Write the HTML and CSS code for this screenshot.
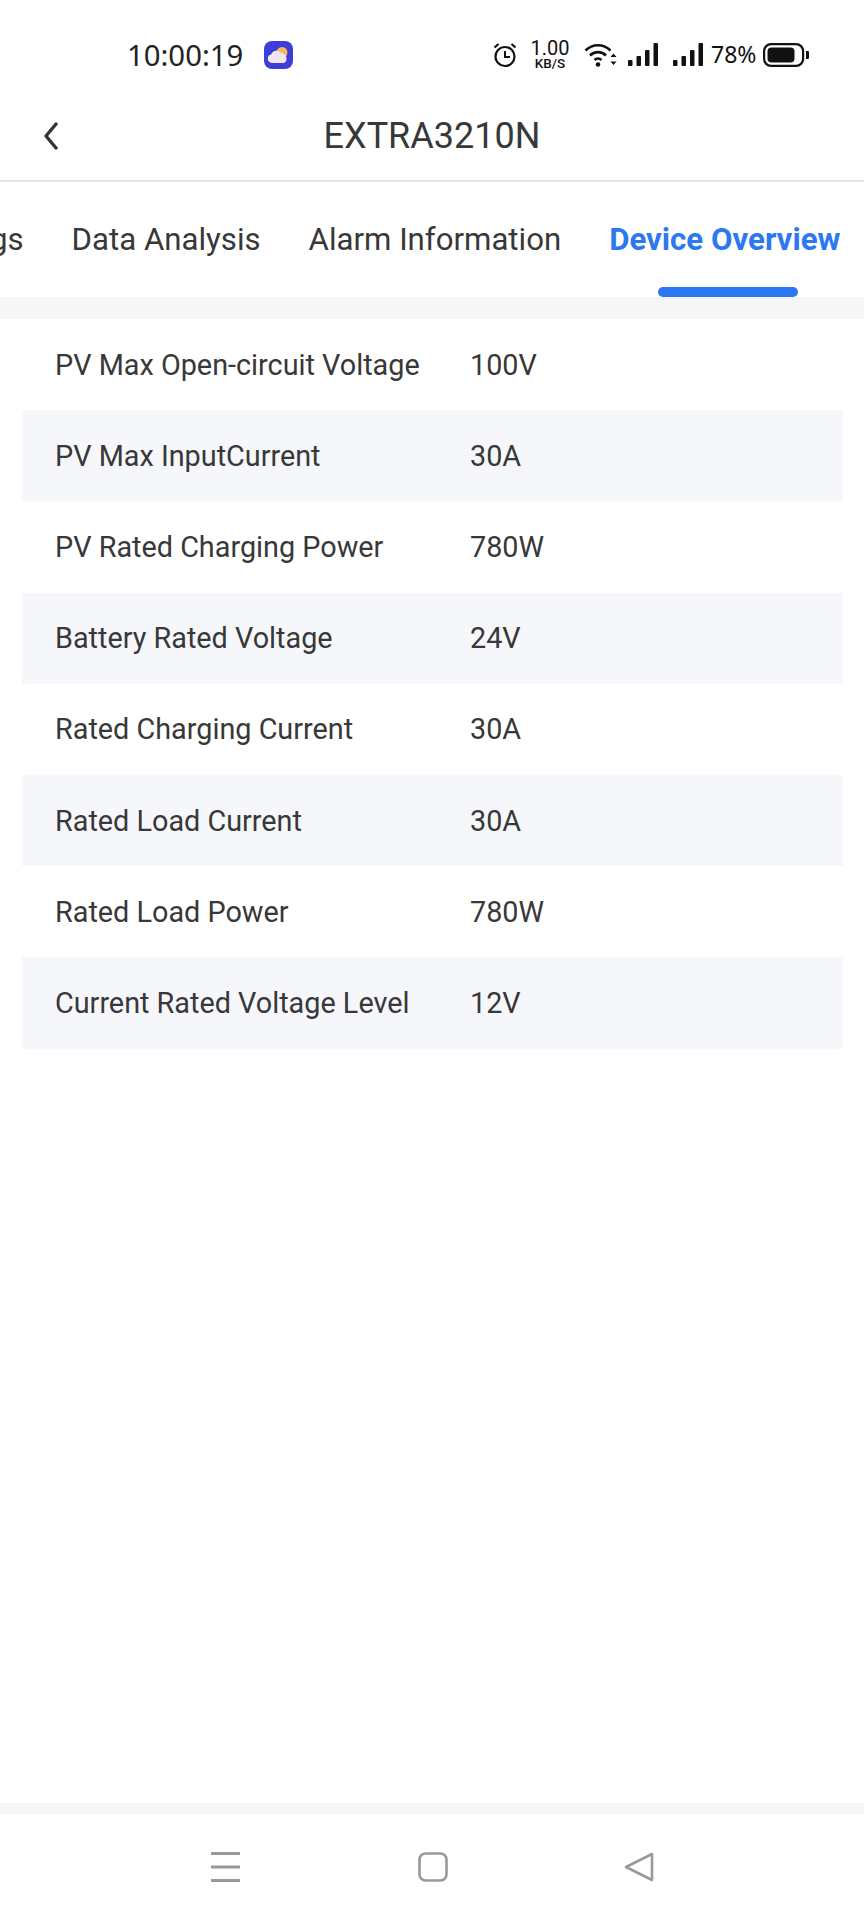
FILE: index.html
```html
<!DOCTYPE html>
<html>
<head>
<meta charset="utf-8">
<title>EXTRA3210N</title>
<link rel="stylesheet" href="styles.css">
</head>
<body>
<div class="phone">

<div class="statusbar">
  <span class="clock">10:00:19</span>
  <svg class="appicon" width="29" height="28" viewBox="0 0 29 28">
    <rect x="0" y="0" width="29" height="28" rx="8" fill="#3d3dd8"/>
    <circle cx="18" cy="11.500" r="5.500" fill="#f6b95c"/>
    <path d="M8 22a4.300 4.300 0 0 1-.8-8.500 5.600 5.600 0 0 1 9.800-1.500 5.200 5.200 0 0 1 5.500 5 4.700 4.700 0 0 1-2.500 5z" fill="#f1e6ee"/>
  </svg>
  <div class="status-right">
    <svg class="alarm" width="24" height="26" viewBox="0 0 24 26" fill="none" stroke="#111">
      <circle cx="12" cy="14.500" r="9.500" stroke-width="2.200"/>
      <path d="M12 9v6h5" stroke-width="2"/>
      <path d="M1.500 5.500l4-3.500M22.500 5.500l-4-3.500" stroke-width="2.200"/>
    </svg>
    <div class="netspeed"><span class="n1">1.00</span><span class="n2">KB/S</span></div>
    <svg class="wifi" width="33" height="24" viewBox="0 0 33 24" fill="none" stroke="#111" stroke-width="2.600">
      <path d="M1.500 7.500c7-7 18-7 25 0M6 12.500c4.500-4.500 11.500-4.500 16 0M10.500 17c2-2 5-2 7 0"/>
      <circle cx="14" cy="21.500" r="2.300" fill="#111" stroke="none"/>
      <path d="M29.500 10.500l3 3.500h-6zM29.500 22l3-3.500h-6z" fill="#111" stroke="none"/>
    </svg>
    <svg class="signal first" width="30" height="24" viewBox="0 0 30 24" fill="#111">
      <rect x="0" y="17" width="4.500" height="6" rx="1"/>
      <rect x="8.500" y="13" width="4.500" height="10" rx="1"/>
      <rect x="17" y="7" width="4.500" height="16" rx="1"/>
      <rect x="25.500" y="0" width="4.500" height="23" rx="1"/>
    </svg>
    <svg class="signal" width="30" height="24" viewBox="0 0 30 24" fill="#111">
      <rect x="0" y="17" width="4.500" height="6" rx="1"/>
      <rect x="8.500" y="13" width="4.500" height="10" rx="1"/>
      <rect x="17" y="7" width="4.500" height="16" rx="1"/>
      <rect x="25.500" y="0" width="4.500" height="23" rx="1"/>
    </svg>
    <span class="pct">78%</span>
    <svg class="battery" width="46" height="26" viewBox="0 0 46 26" fill="none">
      <rect x="1.100" y="2.100" width="39" height="21.800" rx="7" stroke="#111" stroke-width="2.200"/>
      <rect x="4.500" y="5.500" width="27" height="15" rx="4" fill="#111"/>
      <path d="M43 9h2a1 1 0 0 1 1 1v6a1 1 0 0 1-1 1h-2z" fill="#111"/>
    </svg>
  </div>
</div>

<div class="navbar">
  <svg class="back" width="14" height="28" viewBox="0 0 14 28" fill="none" stroke="#333" stroke-width="3.400" stroke-linecap="round" stroke-linejoin="round">
    <path d="M12 2L2 14l10 12"/>
  </svg>
  <div class="title">EXTRA3210N</div>
</div>

<div class="tabs">
  <span class="tab cut">gs</span>
  <span class="tab">Data Analysis</span>
  <span class="tab">Alarm Information</span>
  <span class="tab active">Device Overview</span>
</div>
<div class="band"></div>

<div class="list">
  <div class="row"><span class="label">PV Max Open-circuit Voltage</span><span>100V</span></div>
  <div class="row alt"><span class="label">PV Max InputCurrent</span><span>30A</span></div>
  <div class="row"><span class="label">PV Rated Charging Power</span><span>780W</span></div>
  <div class="row alt"><span class="label">Battery Rated Voltage</span><span>24V</span></div>
  <div class="row"><span class="label">Rated Charging Current</span><span>30A</span></div>
  <div class="row alt"><span class="label">Rated Load Current</span><span>30A</span></div>
  <div class="row"><span class="label">Rated Load Power</span><span>780W</span></div>
  <div class="row alt"><span class="label">Current Rated Voltage Level</span><span>12V</span></div>
</div>

<div class="spacer"></div>
<div class="band bottom"></div>

<div class="sysnav">
  <svg width="32" height="30" viewBox="0 0 32 30" fill="none" stroke="#999" stroke-width="3">
    <path d="M1 1.500h29M1 15h29M1 28.500h29"/>
  </svg>
  <svg width="30" height="30" viewBox="0 0 30 30" fill="none" stroke="#999" stroke-width="2.600">
    <rect x="1.500" y="1.500" width="27" height="27" rx="6"/>
  </svg>
  <svg width="30" height="30" viewBox="0 0 30 30" fill="none" stroke="#999" stroke-width="2.600" stroke-linejoin="round">
    <path d="M28 2v26L2 15z"/>
  </svg>
</div>

</div>
</body>
</html>
```

FILE: styles.css
```css
html, body { margin: 0; padding: 0; background: #fff; }
body { font-family: Roboto, "Liberation Sans", sans-serif; color: #383838; }

.phone { width: 864px; height: 1920px; display: flex; flex-direction: column; overflow: hidden; }

/* status bar */
.statusbar { height: 110px; display: flex; align-items: center; padding: 0 55px 0 127px; box-sizing: border-box; color: #111; }
.clock { font-family: "Noto Sans", sans-serif; font-size: 29.300px; color: #222; width: 137px; }
.appicon { display: block; }
.status-right { margin-left: auto; display: flex; align-items: center; }
.status-right svg { display: block; }
.netspeed { display: flex; flex-direction: column; align-items: center; width: 36px; margin-left: 15px; }
.n1 { font-size: 20px; line-height: 17px; }
.n2 { font-size: 13.500px; line-height: 13px; font-weight: 500; }
.wifi { margin-left: 16px; }
.signal { margin-left: 15px; }
.signal.first { margin-left: 11px; }
.pct { font-family: "Noto Sans", sans-serif; font-size: 23px; line-height: 24px; width: 45px; margin: -2px 0 0 8px; white-space: nowrap; }
.battery { margin-left: 7px; }

/* title bar */
.navbar { height: 72px; padding-bottom: 18px; box-sizing: border-box; display: grid; grid-template-columns: 1fr auto 1fr; align-items: center; border-bottom: 2px solid #e6e6e6; }
.back { margin-left: 44px; }
.title { font-size: 36px; color: #383838; }

/* tabs */
.tabs { height: 115px; display: flex; gap: 48px; margin-left: -10px; }
.tab { font-size: 31.200px; line-height: 115px; white-space: nowrap; position: relative; height: 115px; }
.tab.active { color: #2b78f0; font-weight: 700; }
.tab.active::after { content: ""; position: absolute; left: 49px; width: 140px; height: 10px; bottom: 0; background: #2b78f0; border-radius: 5px; }

.band { height: 22px; background: #f6f6f6; }

/* table */
.list { margin: 0 21px 0 22px; }
.row { height: 91.200px; display: flex; align-items: center; padding-left: 33px; font-size: 28.800px; }
.row.alt { background: #f6f7fb; }
.label { width: 415px; }

.spacer { flex: 1; }
.band.bottom { height: 11px; }

/* android nav */
.sysnav { height: 106px; display: flex; align-items: center; justify-content: space-between; padding: 0 210px; box-sizing: border-box; }
```
